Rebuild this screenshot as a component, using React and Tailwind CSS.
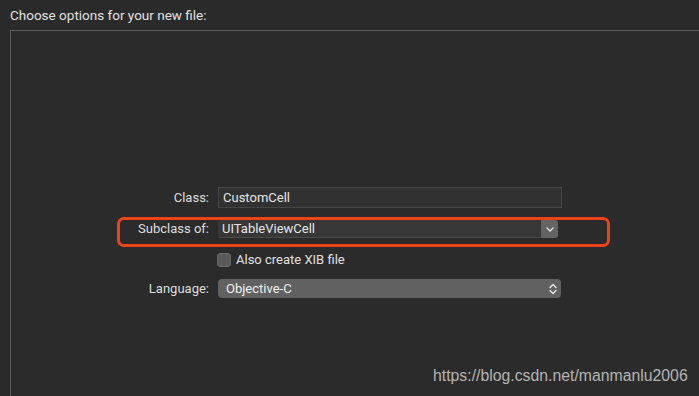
import React from 'react';

const labelCls = 'w-[198px] shrink-0 text-right text-[13px] text-[#dedede]';

export default function App() {
  return (
    <div className="w-[699px] h-[396px] overflow-hidden bg-[#2a2a2a] flex flex-col font-['Roboto',sans-serif] relative">
      {/* Header */}
      <div className="h-[30px] pl-[10px] pt-[7px] text-[13.5px] leading-[16px] text-[#e0e0e0]">
        Choose options for your new file:
      </div>

      {/* Options panel */}
      <div className="flex-1 ml-[10px] border-l border-t border-[#5c5c5c] bg-[#2b2b2b] pt-[156px]">
        {/* Class */}
        <div className="flex items-center gap-[9px] h-[21px]">
          <div className={labelCls}>Class:</div>
          <div className="w-[344px] h-[21px] border border-[#464646] bg-[#313131] pl-[4px] text-[13px] leading-[19px] text-[#e6e6e6]">
            CustomCell
          </div>
        </div>

        {/* Subclass of */}
        <div className="relative flex items-center gap-[9px] h-[18px] mt-[12px]">
          <div className={labelCls}>Subclass of:</div>
          <div className="flex w-[340px] h-[18px] rounded-[3px] bg-[#373737] border-b border-[#4a4a4a]">
            <div className="flex-1 pl-[4px] text-[13px] leading-[18px] text-[#e6e6e6]">UITableViewCell</div>
            <div className="w-[17px] h-[18px] rounded-r-[3px] bg-[#646464] flex items-center justify-center">
              <svg width="8" height="5" viewBox="0 0 8 5" fill="none">
                <path d="M1 1l3 3 3-3" stroke="#e8e8e8" strokeWidth="1.3" strokeLinecap="round" strokeLinejoin="round" />
              </svg>
            </div>
          </div>
          {/* red highlight */}
          <div className="absolute left-[106px] top-[-3px] w-[493px] h-[30px] rounded-[7px] border-[3px] border-[#ec4318]" />
        </div>

        {/* Checkbox */}
        <div className="flex items-center gap-[5px] h-[14px] mt-[15px] ml-[206px]">
          <div className="w-[14px] h-[14px] rounded-[3px] bg-[#5a5a5a] border border-[#6a6a6a]" />
          <div className="text-[13px] leading-[14px] text-[#e0e0e0]">Also create XIB file</div>
        </div>

        {/* Language */}
        <div className="flex items-center gap-[9px] h-[19px] mt-[12px]">
          <div className={labelCls}>Language:</div>
          <div className="flex items-center w-[343px] h-[19px] rounded-[4px] bg-[#616161]">
            <div className="flex-1 pl-[8px] text-[13px] leading-[19px] text-[#f0f0f0]">Objective-C</div>
            <div className="w-[16px] flex items-center justify-center">
              <svg width="8" height="12" viewBox="0 0 8 12" fill="none">
                <path d="M1 4.5l3-3 3 3M1 7.5l3 3 3-3" stroke="#ececec" strokeWidth="1.3" strokeLinecap="round" strokeLinejoin="round" />
              </svg>
            </div>
          </div>
        </div>
      </div>

      {/* watermark */}
      <div className="absolute left-[433px] top-[366px] text-[15.8px] leading-[19px] text-[#b4b4b4] font-['Liberation_Sans',Arial,sans-serif]">
        https://blog.csdn.net/manmanlu2006
      </div>
    </div>
  );
}
